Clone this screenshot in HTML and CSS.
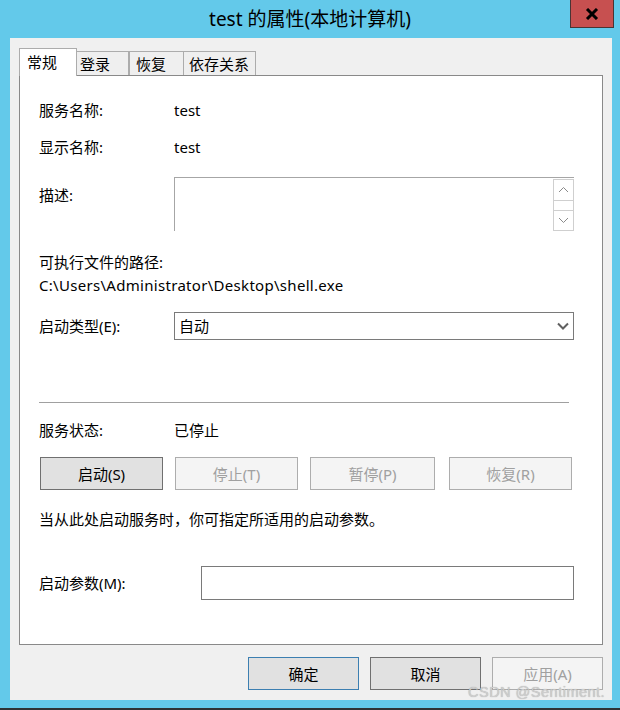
FILE: index.html
```html
<!DOCTYPE html>
<html lang="zh-CN">
<head>
<meta charset="utf-8">
<title>test 的属性(本地计算机)</title>
<link rel="stylesheet" href="styles.css">
</head>
<body>
<div class="window">
  <div class="titlebar">
    <span class="title">test 的属性(本地计算机)</span>
    <div class="close">
      <svg width="14" height="12" viewBox="0 0 14 12"><path d="M2 1 L12 11 M12 1 L2 11" stroke="#000" stroke-width="3" fill="none"/></svg>
    </div>
  </div>
  <div class="client">
    <div class="tabs">
      <div class="tab active t1">常规</div>
      <div class="tab t2">登录</div>
      <div class="tab t3">恢复</div>
      <div class="tab t4">依存关系</div>
    </div>
    <div class="pane">
      <div class="row r1"><span class="label">服务名称:</span><span class="value">test</span></div>
      <div class="row r2"><span class="label">显示名称:</span><span class="value">test</span></div>
      <div class="row r3">
        <span class="label desc-label">描述:</span>
        <div class="textarea">
          <div class="scroll">
            <div class="sbtn up"><svg width="11" height="7" viewBox="0 0 11 7"><path d="M1 6 L5.5 1.5 L10 6" stroke="#8a8a8a" stroke-width="1" fill="none"/></svg></div>
            <div class="strack"></div>
            <div class="sbtn down"><svg width="11" height="7" viewBox="0 0 11 7"><path d="M1 1 L5.5 5.5 L10 1" stroke="#8a8a8a" stroke-width="1" fill="none"/></svg></div>
          </div>
        </div>
      </div>
      <div class="row r4"><span class="label wide">可执行文件的路径:</span></div>
      <div class="row r5"><span class="path">C:\Users\Administrator\Desktop\shell.exe</span></div>
      <div class="row r6">
        <span class="label">启动类型(E):</span>
        <div class="combo"><span>自动</span>
          <svg width="12" height="8" viewBox="0 0 12 8"><path d="M1 1.5 L6 6.5 L11 1.5" stroke="#606060" stroke-width="2" fill="none"/></svg>
        </div>
      </div>
      <div class="sep"></div>
      <div class="row r7"><span class="label">服务状态:</span><span class="value">已停止</span></div>
      <div class="btnrow">
        <div class="btn svc enabled">启动(S)</div>
        <div class="btn svc disabled">停止(T)</div>
        <div class="btn svc disabled b3">暂停(P)</div>
        <div class="btn svc disabled b4">恢复(R)</div>
      </div>
      <div class="row hint">当从此处启动服务时，你可指定所适用的启动参数。</div>
      <div class="row r8">
        <span class="label">启动参数(M):</span>
        <div class="input"></div>
      </div>
    </div>
    <div class="footer">
      <div class="btn dlg default">确定</div>
      <div class="btn dlg enabled">取消</div>
      <div class="btn dlg disabled">应用(A)</div>
    </div>
    <div class="watermark">CSDN @Sentiment.</div>
  </div>
</div>
</body>
</html>
```
FILE: styles.css
```css
* { box-sizing: border-box; }
html, body { margin: 0; padding: 0; }
body {
  width: 620px;
  height: 710px;
  overflow: hidden;
  font-family: "Noto Sans", "Noto Sans CJK SC", sans-serif;
  font-size: 15px;
  color: #000;
  background: #63c9ea;
}
.window {
  width: 620px;
  height: 710px;
  background: #63c9ea;
  border-bottom: 2px solid #2e3336;
  padding: 0 8px 0 10px;
  position: relative;
}
.titlebar {
  height: 38px;
  display: flex;
  align-items: center;
  justify-content: center;
  padding-bottom: 1px;
  margin-left: -10px;
  margin-right: -8px;
}
.title {
  font-size: 19px;
  font-family: "Noto Sans", "Noto Sans CJK SC", sans-serif;
  color: #000;
  line-height: 24px;
}
.close {
  position: absolute;
  top: 0;
  left: 570px;
  width: 44px;
  height: 28px;
  background: #c75050;
  border: 1px solid #4a3434;
  border-top: none;
  display: flex;
  align-items: center;
  justify-content: center;
}
.client {
  height: 662px;
  background: #f0f0f0;
  padding: 10px 9px 0 9px;
  position: relative;
}
.tabs {
  display: flex;
  align-items: flex-end;
  height: 27px;
  position: relative;
  z-index: 2;
}
.tab {
  height: 24px;
  border: 1px solid #acacac;
  border-bottom: none;
  background: #efefef;
  line-height: 22px;
  padding-top: 1px;
  font-size: 15px;
  white-space: nowrap;
}
.tab.active {
  height: 28px;
  margin-bottom: -1px;
  background: #fff;
  line-height: 26px;
  padding-top: 0;
}
.t1 { width: 58px; padding-left: 7px; }
.t2 { width: 52px; padding-left: 3px; border-left: none; }
.t3 { width: 55px; padding-left: 6px; border-left-color: #acacac; }
.t4 { width: 72px; padding-left: 5px; border-left: none; }
.pane {
  height: 570px;
  background: #fff;
  border: 1px solid #898989;
  padding: 0 28px 0 19px;
  display: flex;
  flex-direction: column;
}
.row {
  display: flex;
  align-items: center;
  min-height: 20px;
  line-height: 20px;
}
.label {
  width: 135px;
  flex: none;
  white-space: nowrap;
}
.label.wide { width: auto; }
.value { white-space: nowrap; }
.r1 { margin-top: 24px; }
.r2 { margin-top: 17px; }
.r3 { margin-top: 20px; align-items: flex-start; }
.desc-label { margin-top: 8px; }
.textarea {
  width: 400px;
  height: 54px;
  border-top: 1px solid #a6a6a6;
  border-left: 1px solid #a6a6a6;
  display: flex;
  justify-content: flex-end;
}
.scroll {
  width: 21px;
  display: flex;
  flex-direction: column;
  margin-top: 1px;
}
.sbtn {
  height: 22px;
  border: 1px solid #cfcfcf;
  display: flex;
  align-items: center;
  justify-content: center;
}
.sbtn.down { height: 21px; }
.strack {
  height: 10px;
  border-left: 1px solid #cfcfcf;
  border-right: 1px solid #cfcfcf;
}
.r4 { margin-top: 21px; }
.r5 { margin-top: 3px; }
.path { white-space: nowrap; letter-spacing: 0.3px; }
.r6 { margin-top: 17px; }
.combo {
  width: 401px;
  height: 28px;
  border: 1px solid #7a7a7a;
  display: flex;
  align-items: center;
  justify-content: space-between;
  padding: 0 4px 0 4px;
}
.sep {
  margin-top: 62px;
  height: 1px;
  width: 530px;
  background: #a0a0a0;
}
.r7 { margin-top: 17px; }
.btnrow {
  margin-top: 17px;
  display: flex;
  padding-left: 1px;
}
.btn {
  display: flex;
  align-items: center;
  justify-content: center;
  height: 33px;
  border: 1px solid #adadad;
  white-space: nowrap;
}
.btn.enabled { background: #e1e1e1; border-color: #707070; color: #000; }
.btn.default { background: #e1e1e1; border-color: #3c7fb1; color: #000; }
.btn.disabled { background: #f4f4f4; border-color: #adadad; color: #a0a0a0; }
.svc { width: 123px; margin-right: 12px; }
.svc.b3 { width: 125px; margin-right: 14px; }
.svc.b4 { width: 123px; margin-right: 0; }
.hint { margin-top: 19px; white-space: nowrap; }
.r8 { margin-top: 37px; }
.r8 .label { width: 162px; }
.input {
  width: 374px;
  height: 34px;
  border: 1px solid #7a7a7a;
}
.footer {
  margin-top: 12px;
  display: flex;
  justify-content: flex-end;
  gap: 11px;
}
.dlg { width: 111px; height: 33px; }
.watermark {
  position: absolute;
  left: 458px;
  top: 646px;
  font-family: "Liberation Sans", sans-serif;
  font-size: 14.5px;
  color: #cdcdcd;
  text-shadow: 0 0 1px rgba(0, 0, 0, 0.3);
  white-space: nowrap;
  letter-spacing: 0.5px;
}
```
